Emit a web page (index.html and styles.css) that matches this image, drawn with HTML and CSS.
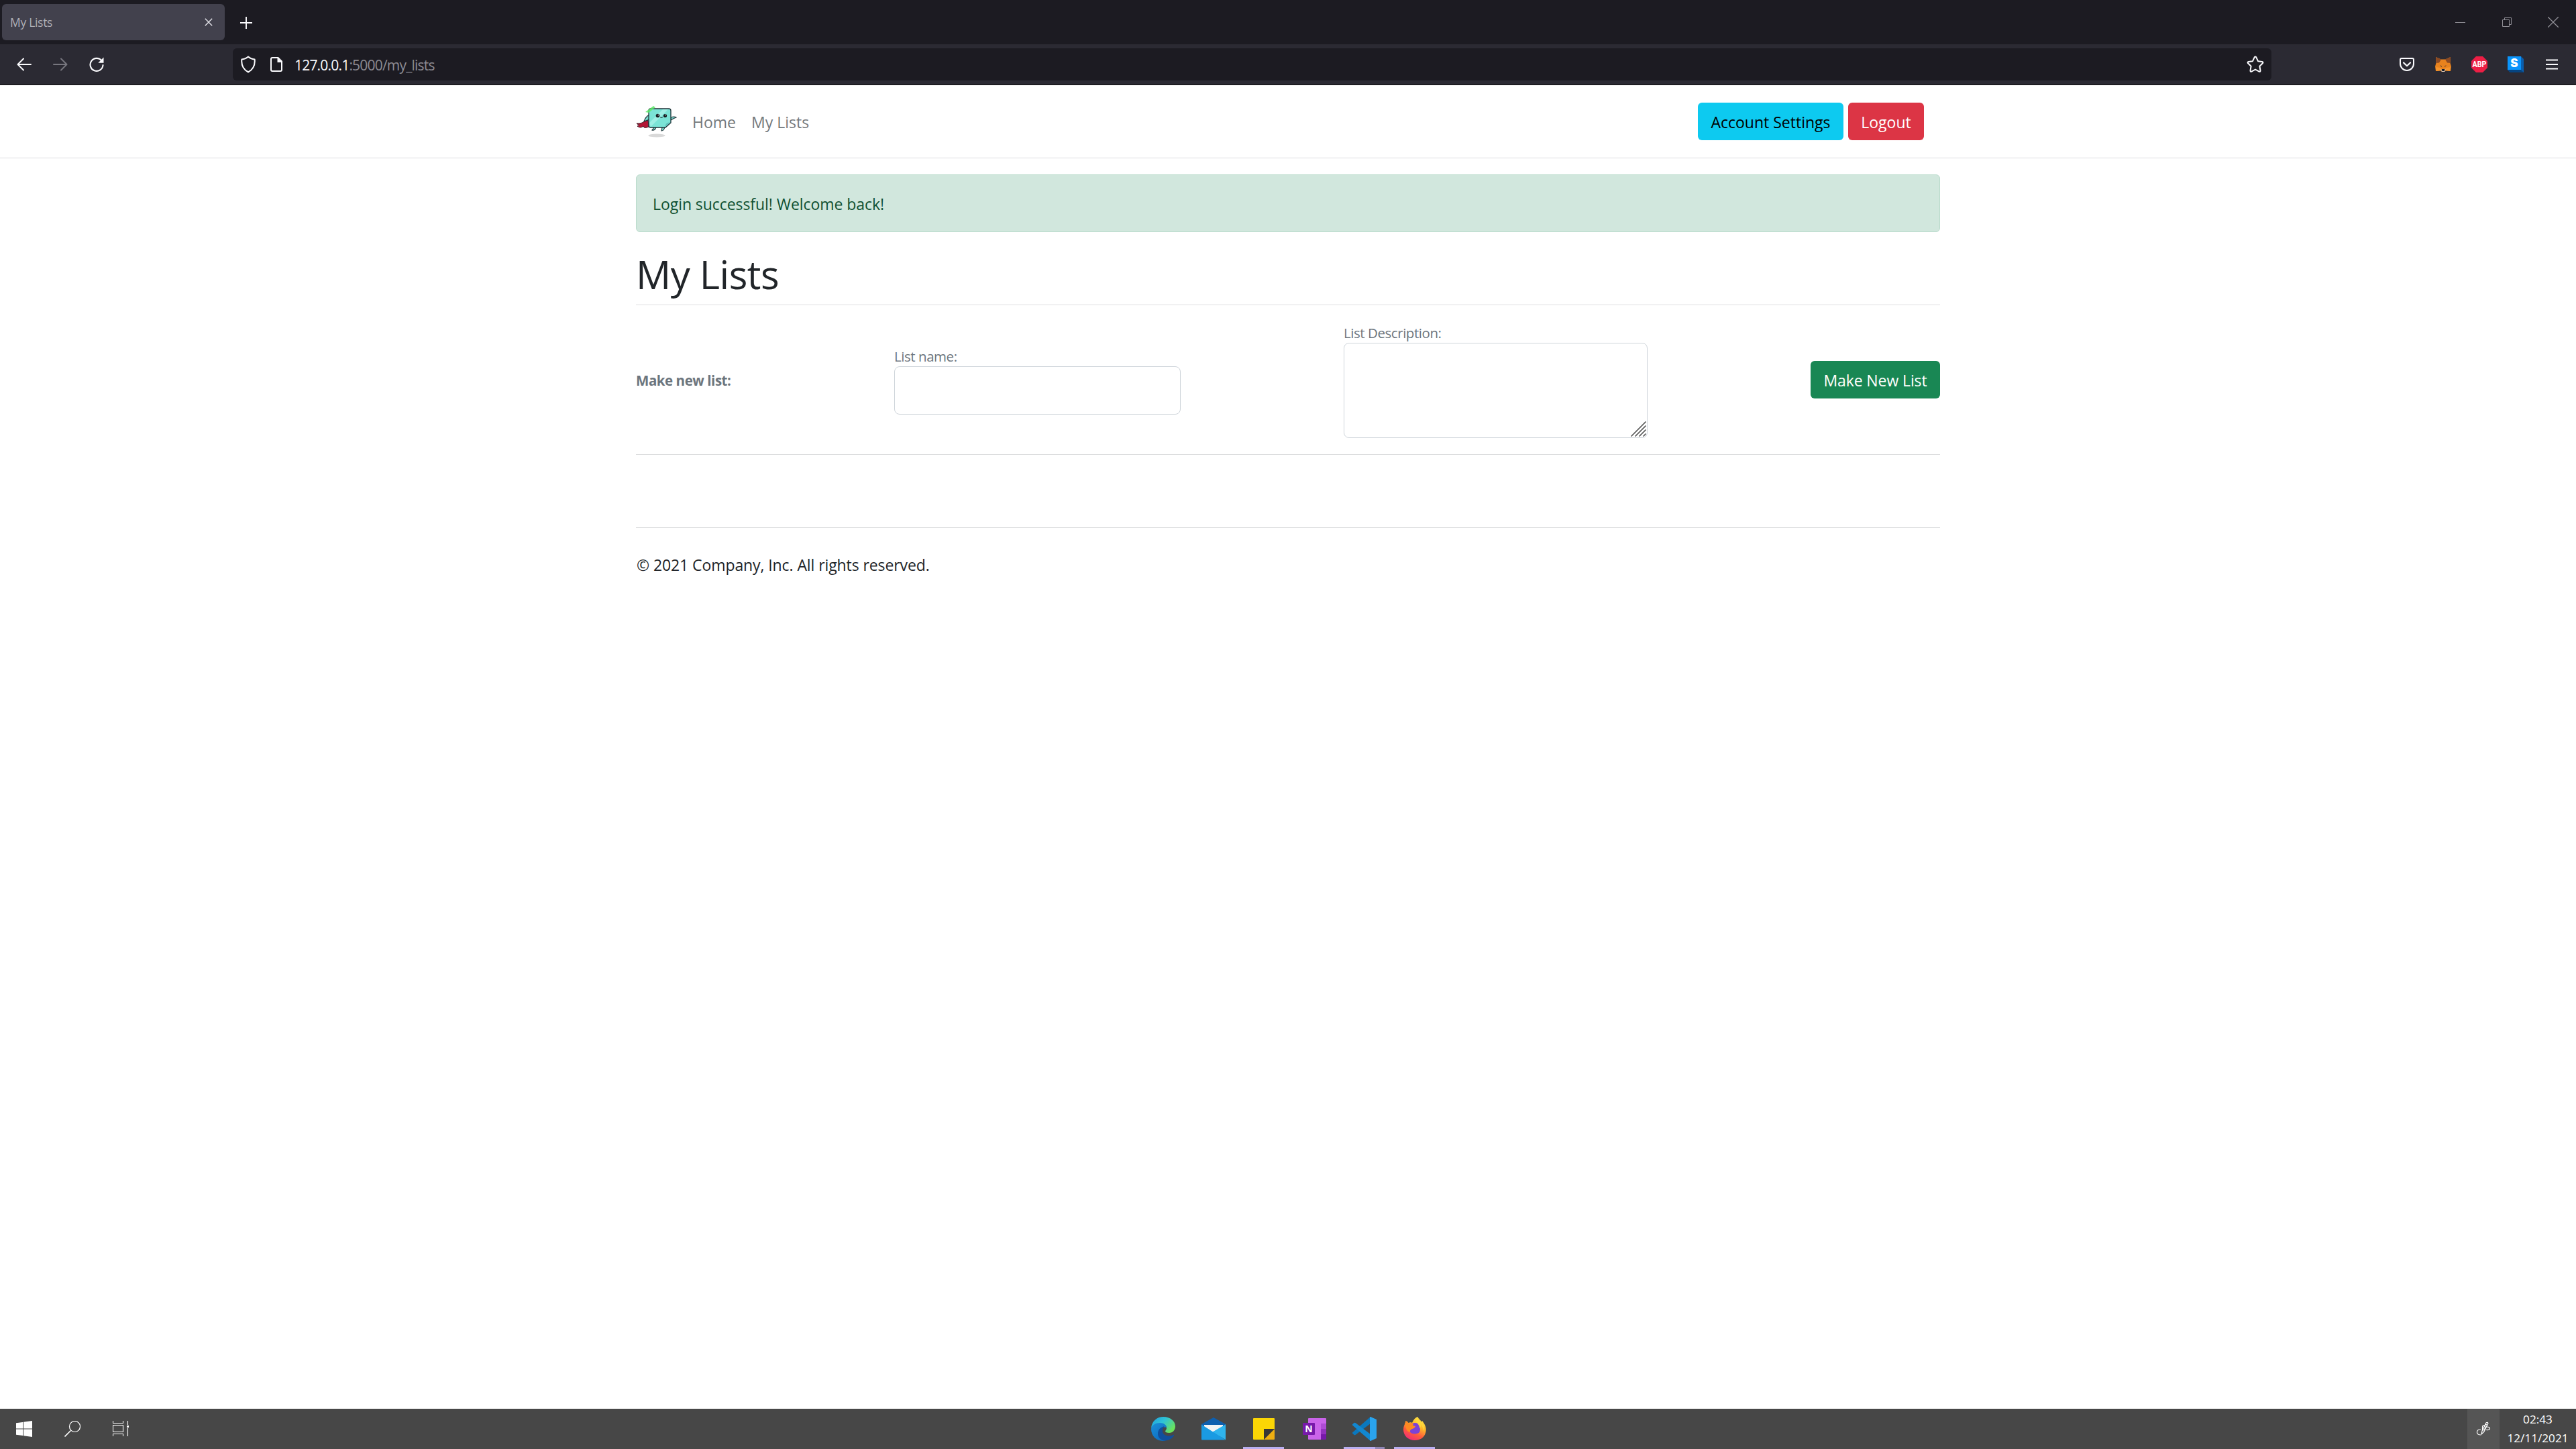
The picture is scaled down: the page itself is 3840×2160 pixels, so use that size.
FILE: index.html
```html
<!DOCTYPE html>
<html lang="en">
<head>
<meta charset="utf-8">
<title>My Lists</title>
<link rel="stylesheet" href="styles.css">
</head>
<body>
<div class="screen">
  <div class="tabbar">
    <div class="tab">
      <span class="tab-title">My Lists</span>
      <svg class="tab-close" width="12" height="12" viewBox="0 0 12 12"><path d="M.8.8l10.4 10.4M11.2.8L.8 11.2" stroke="#e4e4ea" stroke-width="1.4"/></svg>
    </div>
    <svg class="new-tab" width="18" height="18" viewBox="0 0 18 18"><path d="M9 0v18M0 9h18" stroke="#fbfbfe" stroke-width="1.9"/></svg>
    <div class="window-controls">
      <span class="win-btn"><svg width="15" height="15" viewBox="0 0 15 15"><path d="M0 7.5h15" stroke="#8e8d94"/></svg></span>
      <span class="win-btn"><svg width="14" height="14" viewBox="0 0 14 14" fill="none" stroke="#8e8d94"><path d="M.5 3.5h10v10H.5zM3.500 3V.5h10v10H11"/></svg></span>
      <span class="win-btn"><svg width="16" height="16" viewBox="0 0 16 16"><path d="M0 0l16 16M16 0L0 16" stroke="#8e8d94" stroke-width="1.3"/></svg></span>
    </div>
  </div>

  <div class="toolbar">
    <div class="nav-buttons">
      <span class="tool"><svg width="22" height="20" viewBox="0 0 22 20" fill="none" stroke="#fbfbfe" stroke-width="2" stroke-linecap="round" stroke-linejoin="round"><path d="M10 1.500L1.500 10l8.500 8.500M2 10h19"/></svg></span>
      <span class="tool"><svg width="22" height="20" viewBox="0 0 22 20" fill="none" stroke="#77767e" stroke-width="2" stroke-linecap="round" stroke-linejoin="round"><path d="M12 1.500l8.500 8.500-8.500 8.500M20 10H1"/></svg></span>
      <span class="tool"><svg width="22" height="22" viewBox="0 0 22 22"><path d="M18.500 5.500A9.500 9.500 0 1 0 20.500 12" fill="none" stroke="#fbfbfe" stroke-width="2.100" stroke-linecap="round"/><path d="M21.500.5v8.200h-8.200z" fill="#fbfbfe"/></svg></span>
    </div>
    <div class="urlbar">
      <svg class="shield" width="24" height="26" viewBox="0 0 24 26"><path d="M12 1.500c2.500 2.400 6 3.500 9.600 3.900.9 8.600-2.200 15.200-9.600 19.100C4.600 20.600 1.500 14 2.400 5.400 6 5 9.500 3.900 12 1.500z" fill="none" stroke="#fbfbfe" stroke-width="2" stroke-linejoin="round"/></svg>
      <svg class="doc" width="18" height="22" viewBox="0 0 18 22"><path d="M3 1h8.500L17 6.500V19a2 2 0 0 1-2 2H3a2 2 0 0 1-2-2V3a2 2 0 0 1 2-2z" fill="none" stroke="#fbfbfe" stroke-width="2"/><path d="M10.500 1v7H17.500z" fill="#fbfbfe"/></svg>
      <span class="url"><b>127.0.0.1</b>:5000/my_lists</span>
      <svg class="star" width="26" height="26" viewBox="0 0 26 26"><path d="M11.700 2.400q1.300-2 2.600 0l2.700 5.800 6 .8q2.300.5.9 2.300l-4.500 4.400 1.100 6.400q.1 2.200-2 1.500L13 20.500l-5.500 3.100q-2.100.7-2-1.500l1.100-6.400-4.500-4.400Q.7 9.500 3 9l6-.8z" fill="none" stroke="#fbfbfe" stroke-width="2" stroke-linejoin="round"/></svg>
    </div>
    <div class="extensions">
      <span class="tool"><svg width="22" height="20" viewBox="0 0 22 20" fill="none" stroke="#fbfbfe" stroke-width="2" stroke-linecap="round" stroke-linejoin="round"><path d="M3 1h16q2 0 2 2v6a10 10 0 0 1-20 0V3q0-2 2-2z"/><path d="M6 7.500l5 4.700 5-4.700" stroke-width="2.200"/></svg></span>
      <span class="tool"><svg width="24" height="24" viewBox="0 0 24 24"><path d="M1 1l8 3.500h6L23 1l-.5 9 1.500 5-1 7-7-1-2 2h-4l-2-2-7 1-1-7 1.500-5z" fill="#e8821e"/><path d="M1 1l8 3.500L6 9.500 1.500 10zM23 1l-8 3.500 3 5 4.500.5z" fill="#8a4a25"/><path d="M7 13l3 1.500-.5 1.500zM17 13l-3 1.500.5 1.500z" fill="#543a32"/><path d="M1 16l7 1 2 4-2 .5-6.500.5zM23 16l-7 1-2 4 2 .5 6.500.5z" fill="#f5932b"/><path d="M8 19.500h8L14 23h-4z" fill="#d6c7bb"/><path d="M10 19h4l.5 2-1.500 1h-2l-1.500-1z" fill="#161a24"/></svg></span>
      <span class="tool abp">
        <svg width="24" height="24" viewBox="0 0 24 24"><path d="M7 0h10l7 7v10l-7 7H7l-7-7V7z" fill="#ed1e45"/><text x="12" y="16.300" text-anchor="middle" textLength="21" lengthAdjust="spacingAndGlyphs" font-family="Roboto, sans-serif" font-size="12" font-weight="700" fill="#fff">ABP</text></svg>
      </span>
      <span class="tool"><svg width="24" height="24" viewBox="0 0 24 24"><path d="M20 0l4 4v20H4l-4-4z" fill="#0a5fae"/><path d="M20 20l4 4H4l-4-4z" fill="#064480"/><path d="M0 0h20v20H0z" fill="#0a94fb"/><text x="10" y="16" text-anchor="middle" font-family="Inter, sans-serif" font-size="17" font-weight="900" fill="#fff">S</text></svg></span>
      <span class="tool"><svg width="18" height="16" viewBox="0 0 18 16"><path d="M0 1.500h18M0 8h18M0 14.500h18" stroke="#fbfbfe" stroke-width="1.900"/></svg></span>
    </div>
  </div>

  <header class="navbar">
    <div class="container nav-inner">
      <svg class="brand" width="61" height="48" viewBox="0 0 61 48">
        <ellipse cx="31" cy="45" rx="12.500" ry="2.500" fill="#d9d9d9"/>
        <path d="M18 22c-5-1-6 6-17 5 2 2 3 2 4 2-1 1-2 2-3 2 4 3 7 2 9 0 1 3 3 3 8 1z" fill="#b31534" stroke="#3a1420" stroke-width="1"/>
        <path d="M20 14q-6 3-8 10l8-3zM52 18q5-2 8 0-3 1-8 4zM27 33l-3 4q4 1 6-4M39 33l-1 5q4 0 5-6" fill="#79d8cd" stroke="#22353a" stroke-width="1.100"/>
        <path d="M22 5h27q3 0 3 3v18l-8 7H22q-3 0-3-3V8q0-3 3-3z" fill="#7be3d6" stroke="#203338" stroke-width="1.300"/>
        <path d="M20 26L40 6h8L22 32z" fill="#a9f1e8" opacity=".75"/><path d="M51 25.500q-7-1-7.500 7z" fill="#5fbfba"/>
        <path d="M14 10L26 1l3 2-10 8z" fill="#5de668" opacity=".85"/>
        <circle cx="32.500" cy="15.500" r="2.800" fill="#151c20"/><circle cx="43.500" cy="15.500" r="2.600" fill="#151c20"/><circle cx="33.300" cy="14.500" r=".8" fill="#fff"/><circle cx="44.200" cy="14.500" r=".8" fill="#fff"/>
        <path d="M36 17.500q2 2.500 4 0" fill="none" stroke="#203338"/>
      </svg>
      <nav class="links"><a>Home</a><a>My Lists</a></nav>
      <div class="account"><button class="btn info">Account Settings</button><button class="btn danger">Logout</button></div>
    </div>
  </header>

  <main class="container">
    <div class="alert">Login successful! Welcome back!</div>
    <h1>My Lists</h1>
    <form class="new-list">
      <strong class="form-title">Make new list:</strong>
      <div class="field name"><label>List name:</label><input type="text"></div>
      <div class="field desc">
        <label>List Description:</label>
        <div class="area"><textarea></textarea>
          <svg class="grip" width="23" height="23" viewBox="0 0 23 23"><path d="M1 22L22 1M7 22L22 7M13 22l9-9M19 22l3-3" stroke="#555" stroke-width="1.700" stroke-linecap="round"/></svg>
        </div>
      </div>
      <button type="button" class="btn success">Make New List</button>
    </form>
    <footer>© 2021 Company, Inc. All rights reserved.</footer>
  </main>

  <div class="taskbar">
    <div class="system">
      <span class="slot"><svg width="24" height="24" viewBox="0 0 24 24" fill="#fff"><path d="M0 3.300l10-1.300v9.500H0zM11 1.800L24 0v11.500H11zM0 12.500h10V22L0 20.700zM11 12.500h13V24l-13-1.800z"/></svg></span>
      <span class="slot"><svg width="24" height="24" viewBox="0 0 24 24" fill="none" stroke="#fff"><circle cx="15.500" cy="8.500" r="8" stroke-width="1.200"/><path d="M9.500 14.500L.5 23.500" stroke-width="1.600"/></svg></span>
      <span class="slot"><svg width="24" height="24" viewBox="0 0 24 24" fill="none" stroke="#fff" stroke-width="1.100"><path d="M.5 0v3.500h15V0M.5 6.500h15v10H.5zM.5 23v-3.500h15V23M22.500 0v6M22.500 11v12"/><path d="M21 7h3v3h-3z" fill="#fff" stroke="none"/></svg></span>
    </div>
    <div class="apps">
      <span class="app"><svg width="36" height="36" viewBox="0 0 36 36"><defs><linearGradient id="eg" x1="0" y1="0" x2="1" y2=".6"><stop offset="0" stop-color="#1e9fe0"/><stop offset=".5" stop-color="#2fc3d6"/><stop offset="1" stop-color="#6be25a"/></linearGradient><linearGradient id="eb" x1="0" y1="0" x2=".7" y2="1"><stop offset="0" stop-color="#1b8fd8"/><stop offset="1" stop-color="#0d6cc0"/></linearGradient></defs><path d="M0 17C1 6 9 0 18 0c11 0 18 7 18 14 0 6-4 10-9 10-4 0-6-1-6-2.500 0-1 2-2 2-4.500 0-3-3-6-8-6C8 11 2 13 0 17z" fill="url(#eg)"/><path d="M0 18C1 12 7 9 13 9c7 0 10 4 10 7-7-2-10 4-9 9 1 6 5 10 8 10.500C10 38 0 30 0 18z" fill="url(#eb)"/><path d="M19 14.200c-5 1.500-9 5-9 11 0 6 5 10.800 12 10.300 6-1 10-4 12-7.500.5-1-.3-1.400-1-1-8 3.500-15 .5-16-5-.4-3 .6-5.500 2.500-7z" fill="#114f9c"/></svg></span>
      <span class="app"><svg width="36" height="36" viewBox="0 0 36 36"><path d="M0 11L18 1l18 10v11H0z" fill="#0f5fae"/><path d="M4 12h28v12H4z" fill="#f3f3f3"/><path d="M36 11.500L18 22l18 12z" fill="#38bdf3"/><path d="M36 11.500L16 23l20 11z" fill="#2fb4ee"/><path d="M0 11.500L36 34.500H1q-1 0-1-1z" fill="#1a9ae2"/></svg></span>
      <span class="app active"><svg width="32" height="32" viewBox="0 0 32 32"><path d="M0 1q0-1 1-1h30q1 0 1 1v15L16 32H1q-1 0-1-1z" fill="#fbd605"/><path d="M32 16v15q0 1-1 1H16z" fill="#eeae11"/><path d="M16 16h16L16 32z" fill="#383735"/></svg></span>
      <span class="app"><svg width="36" height="32" viewBox="0 0 36 32"><path d="M9 1q0-1 1-1h25q1 0 1 1v7H9z" fill="#ca64ea"/><path d="M9 8h20v24H10q-1 0-1-1z" fill="#ca64ea"/><path d="M28 8h8v8h-8z" fill="#ae4bd5"/><path d="M28 16h8v8h-8z" fill="#9332bf"/><path d="M28 24h8v7q0 1-1 1h-7z" fill="#7719aa"/><rect x="1" y="7" width="18" height="18" rx="1" fill="#7719aa"/><text x="10" y="21" text-anchor="middle" font-family="Open Sans, sans-serif" font-size="14" font-weight="700" fill="#fff">N</text></svg></span>
      <span class="app active split"><svg width="36" height="36" viewBox="0 0 36 36"><path d="M0 23.500L27 0v10L4.500 27q-1 .6-2 0L.4 25q-.8-.8-.4-1.500z" fill="#0a78be"/><path d="M0 12.500L27 36V26L4.500 9q-1-.6-2 0L.4 11q-.8.800-.4 1.500z" fill="#1287d0"/><path d="M26 0h1l9 4v28l-9 4h-1z" fill="#2aa4ee"/></svg></span>
      <span class="app active"><svg width="36" height="36" viewBox="0 0 36 36"><defs><linearGradient id="ff" x1=".8" y1="0" x2=".3" y2="1"><stop offset="0" stop-color="#fff04a"/><stop offset=".4" stop-color="#ffb52a"/><stop offset=".7" stop-color="#ff5a3c"/><stop offset="1" stop-color="#f02c78"/></linearGradient></defs><path d="M22 0c1 4 4 5 6 8l1-2c5 6 7 12 5 18-2 7-8 11-16 11C8 35 1 28 1 19 1 14 3 11 4 9V6l4 3c3-1 5-1 6 0 2-5 5-8 8-9z" fill="url(#ff)"/><path d="M13 10q5-2 10 0 3 4 3 8.500 0 7-8 7t-8-7q0-5 3-8.500z" fill="#7c42d7"/><path d="M3 10q1-3 3-4l3 4q4-2 7 0l-1 3 4 1q-1 3-5 4-4 2-3 5-5-1-6-6z" fill="#ff8a22"/><path d="M22 0q-4 5-1 9 4 4 4 8 3-2 2-6 3 4 4 10 3-9-3-14z" fill="#ffd83b" opacity=".8"/></svg></span>
    </div>
    <div class="tray">
      <span class="ink"><svg width="22" height="22" viewBox="0 0 22 22" fill="none" stroke="#fff" stroke-width="1.200" stroke-linecap="round" stroke-linejoin="round"><path d="M8 19l1-5 6-12q2-1.500 3 .5L12 15l-4 4zM14 4l3 1.500"/><path d="M6.500 12Q1 12 1.500 16.500 2 20 7 20M11.500 13l2-3 0-4Q9 5 9.500 9v4M16 8q5 0 4.500 3-1 2-5 1.500"/></svg></span>
      <div class="clock"><span>02:43</span><span>12/11/2021</span></div>
    </div>
  </div>
</div>
</body>
</html>
```
FILE: styles.css
```css
* { box-sizing: border-box; }
body {
  margin: 0;
  background: #fff;
  color: #212529;
  font-family: "Open Sans", "Noto Sans", sans-serif;
  font-size: 23px;
}
svg { display: block; flex: none; }
.abp svg { overflow: visible; }
.screen { display: flex; flex-direction: column; width: 3840px; height: 2160px; overflow: hidden; }

/* Browser chrome */
.tabbar { display: flex; align-items: center; height: 66px; background: #1c1b22; flex: none; }
.tab {
  display: flex; align-items: center; justify-content: space-between;
  width: 332px; height: 54px; margin-left: 3px; padding: 0 18px 0 12px;
  border-radius: 6px; background: #42414d;
}
.tab-title { color: #afafb6; font-size: 17.5px; letter-spacing: -.3px; }
.new-tab { margin-left: 23px; margin-top: 2px; }
.window-controls { display: flex; margin-left: auto; }
.win-btn { display: flex; justify-content: center; align-items: center; width: 69px; height: 66px; }
.toolbar {
  display: flex; align-items: center; height: 61px; flex: none;
  background: #2b2a33; border-bottom: 1px solid #0c0c0d;
}
.tool { display: flex; justify-content: center; align-items: center; width: 54px; height: 60px; }
.nav-buttons { display: flex; width: 347px; padding-left: 9px; }
.urlbar {
  display: flex; align-items: center; width: 3039px; height: 48px; padding: 0 11px;
  border-radius: 6px; background: #1c1b22;
}
.doc { margin-left: 21px; }
.url { margin-left: 18px; color: #8c8b93; font-size: 21px; letter-spacing: -.8px; padding-top: 2px; }
.url b { color: #fbfbfe; font-weight: 400; }
.star { margin-left: auto; }
.extensions { display: flex; margin-left: auto; padding-right: 9px; }

/* Page */
.container { width: 1944px; margin: 0 auto; }
.navbar { height: 109px; flex: none; border-bottom: 1px solid #dcdddf; }
.nav-inner { display: flex; align-items: center; height: 108px; }
.brand { width: 61px; }
.links { display: flex; gap: 23px; margin-left: 23px; padding-top: 2px; color: #75797c; }
.account { display: flex; gap: 7px; margin-left: auto; margin-right: 24px; }
.btn {
  height: 56px; padding: 1px 0 0; border: 0; border-radius: 6px;
  font: inherit; text-align: center; white-space: nowrap;
}
.info { width: 217px; background: #0dcaf0; color: #000; }
.danger { width: 113px; background: #dc3545; color: #fff; }
.success { width: 193px; background: #198754; color: #fff; letter-spacing: -.1px; }
main { flex: 1; }
.alert {
  display: flex; align-items: center; height: 86px; margin-top: 24px; padding: 1px 24px 0;
  border: 1px solid #badbcc; border-radius: 6px; background: #d1e7dd; color: #0f5132;
  letter-spacing: -.06px;
}
h1 {
  height: 109px; margin: 0; padding-top: 18px; border-bottom: 1px solid #dcdddf;
  font-size: 58px; line-height: 90px; font-weight: 400; letter-spacing: -.5px;
}
.new-list {
  display: flex; justify-content: space-between; align-items: center;
  height: 223px; border-bottom: 1px solid #dcdddf;
}
.form-title, .field label { color: #6c757d; font-size: 20.5px; letter-spacing: -.45px; }
.form-title { width: 142px; padding-top: 1px; white-space: nowrap; }
.field { display: flex; flex-direction: column; }
.field label { height: 31px; line-height: 32px; }
.name { width: 427px; }
.desc { width: 453px; }
.field input, .field textarea {
  display: block; width: 100%; margin: 0; border: 1px solid #ced4da; border-radius: 8px;
  background: #fff; font: inherit; outline: 0; resize: none;
}
.field input { height: 72px; }
.field textarea { height: 142px; }
.area { position: relative; }
.grip { position: absolute; right: 2px; bottom: 2px; }
footer { margin-top: 108px; border-top: 1px solid #dcdddf; line-height: 36px; padding: 37px 0 0 1px; letter-spacing: -.09px; }

/* Taskbar */
.taskbar { display: grid; grid-template-columns: 1696px 450px 1fr; height: 60px; flex: none; background: #474747; color: #fff; }
.system, .apps, .tray { display: flex; }
.slot { display: flex; width: 72px; align-items: center; justify-content: center; }
.app { display: flex; width: 75px; align-items: center; justify-content: center; }
.active { background: linear-gradient(#b9aef0, #b9aef0) center bottom / 61px 3px no-repeat; }
.split { background: linear-gradient(90deg, #b9aef0 47px, #8e86b4 47px) center bottom / 61px 3px no-repeat; }
.tray { justify-content: flex-end; }
.ink { display: flex; align-items: center; justify-content: center; width: 48px; background: #555; }
.clock {
  display: flex; flex-direction: column; align-items: center; width: 114px; padding-top: 2px;
  font-size: 17.2px; line-height: 28px;
}
```
